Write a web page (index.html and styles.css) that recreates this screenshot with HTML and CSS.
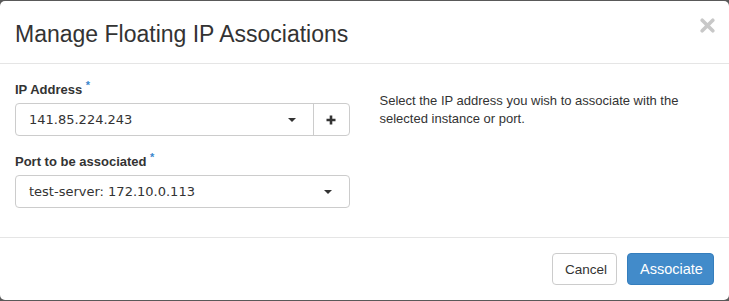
FILE: index.html
```html
<!DOCTYPE html>
<html>
<head>
<meta charset="utf-8">
<link rel="stylesheet" href="styles.css">
</head>
<body>
<div class="modal">
  <div class="modal-header">
    <h4 class="modal-title">Manage Floating IP Associations</h4>
    <span class="close" aria-label="Close">
      <svg width="15" height="15" viewBox="0 0 15 15"><path d="M2.2 2.2L12.8 12.8M12.8 2.2L2.2 12.8" stroke="#c8c8c8" stroke-width="3.6" stroke-linecap="round"/></svg>
    </span>
  </div>
  <div class="modal-body">
    <div class="col">
      <div class="form-group">
        <label class="label">IP Address <span class="req">*</span></label>
        <div class="input-group">
          <div class="select grow">
            <span class="value">141.85.224.243</span>
            <span class="caret"></span>
          </div>
          <div class="addon">
            <svg width="10" height="10" viewBox="0 0 10 10"><path d="M5 0.5V9.5M0.5 5H9.5" stroke="#333" stroke-width="2.6"/></svg>
          </div>
        </div>
      </div>
      <div class="form-group">
        <label class="label">Port to be associated <span class="req">*</span></label>
        <div class="select">
          <span class="value">test-server: 172.10.0.113</span>
          <span class="caret"></span>
        </div>
      </div>
    </div>
    <div class="col right">
      <p class="help">Select the IP address you wish to associate with the selected instance or port.</p>
    </div>
  </div>
  <div class="modal-footer">
    <button class="btn btn-default">Cancel</button>
    <button class="btn btn-primary">Associate</button>
  </div>
</div>
</body>
</html>
```
FILE: styles.css
```css
html, body {
  margin: 0;
  padding: 0;
  height: 100%;
  overflow: hidden;
}
body {
  background: #595959;
  font-family: "Liberation Sans", Arial, sans-serif;
  color: #333;
  font-size: 13px;
}
.modal {
  margin-top: 1px;
  width: 729px;
  height: 299px;
  background: #fff;
  border-radius: 5px;
  display: flex;
  flex-direction: column;
  box-sizing: border-box;
}
.modal-header {
  height: 62px;
  border-bottom: 1px solid #e5e5e5;
  display: flex;
  align-items: flex-start;
  justify-content: space-between;
  padding: 0 14px 0 15px;
}
.modal-title {
  margin: 0;
  padding-top: 18px;
  font-weight: normal;
  font-size: 23px;
  line-height: 30px;
  letter-spacing: 0;
}
.close {
  margin-top: 17px;
  display: block;
  line-height: 0;
}
.modal-body {
  height: 173px;
  box-sizing: border-box;
  padding: 15px 15px 0 15px;
  display: flex;
  gap: 30px;
}
.col {
  width: 335px;
}
.form-group {
  margin-bottom: 15px;
}
.label {
  display: block;
  font-weight: bold;
  font-size: 13px;
  line-height: 19px;
  margin-bottom: 4px;
  padding-top: 1px;
}
.req {
  color: #3a87cd;
  font-size: 11px;
  vertical-align: top;
  position: relative;
  top: -4px;
}
.input-group {
  display: flex;
  height: 33px;
  border: 1px solid #ccc;
  border-radius: 4px;
  box-sizing: border-box;
}
.select {
  height: 33px;
  box-sizing: border-box;
  border: 1px solid #ccc;
  border-radius: 4px;
  display: flex;
  align-items: center;
  justify-content: space-between;
  padding: 0 17px 0 13px;
  font-family: "DejaVu Sans", sans-serif;
  font-size: 13px;
  color: #333;
}
.input-group .select {
  border: none;
  height: 31px;
  border-right: 1px solid #ccc;
  border-radius: 4px 0 0 4px;
  padding-left: 13px;
  flex: 1;
}
.caret {
  width: 0;
  height: 0;
  border-left: 4px solid transparent;
  border-right: 4px solid transparent;
  border-top: 4px solid #333;
}
.addon {
  width: 35px;
  display: flex;
  align-items: center;
  justify-content: center;
}
.help {
  margin: 0;
  font-size: 13px;
  line-height: 18px;
  padding-top: 13px;
}
.modal-footer {
  flex: 1;
  border-top: 1px solid #e5e5e5;
  display: flex;
  justify-content: flex-end;
  align-items: flex-start;
  padding: 15px 15px 0 15px;
  gap: 10px;
}
.btn {
  height: 32px;
  border-radius: 4px;
  font-family: "Liberation Sans", Arial, sans-serif;
  font-size: 14px;
  padding: 0 12px;
  box-sizing: border-box;
  margin: 0;
}
.btn-default {
  background: #fff;
  border: 1px solid #ccc;
  color: #333;
  width: 65px;
  font-size: 13.5px;
}
.btn-primary {
  background: #428bca;
  border: 1px solid #357ebd;
  color: #fff;
  width: 87px;
  font-size: 14.5px;
}
```
